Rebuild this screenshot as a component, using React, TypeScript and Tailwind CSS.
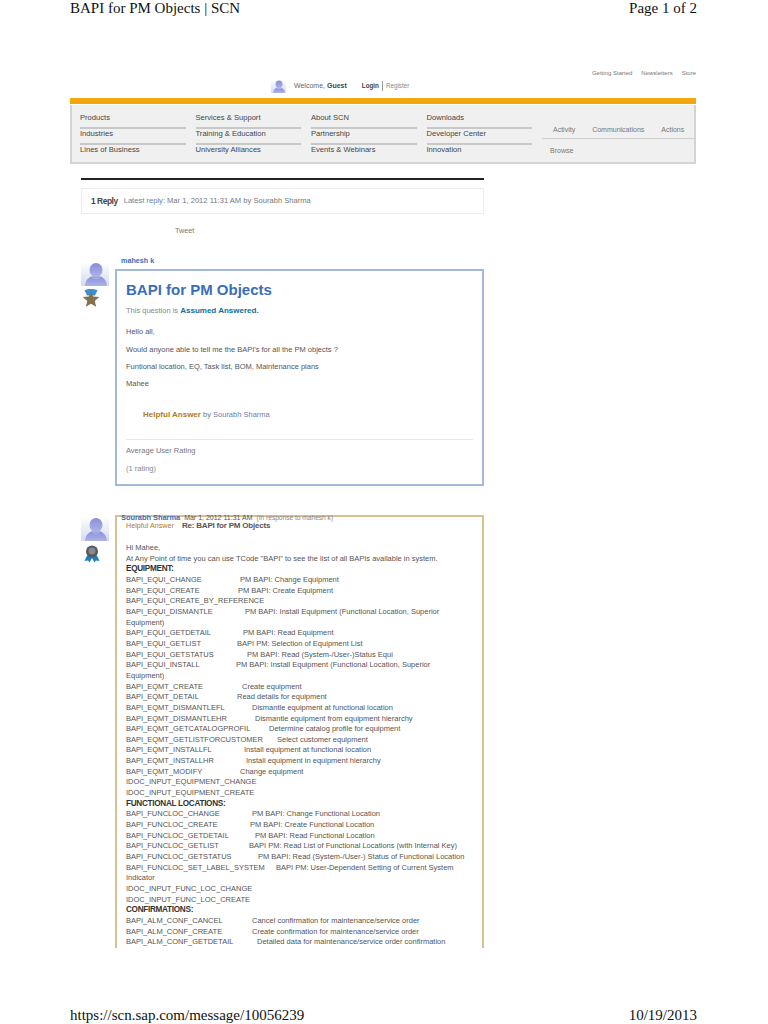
function Avatar({ id, className }: { id: string; className: string }) {
  return (
    <svg viewBox="0 0 28 24" className={className} aria-hidden="true">
      <defs>
        <linearGradient id={id} x1="0" y1="0" x2="0" y2="1">
          <stop offset="0" stopColor="#ffffff" />
          <stop offset="1" stopColor="#d3dbf3" />
        </linearGradient>
        <linearGradient id={`${id}-p`} x1="0" y1="0" x2="0" y2="1">
          <stop offset="0" stopColor="#8a8fd6" />
          <stop offset="1" stopColor="#aeb3e8" />
        </linearGradient>
      </defs>
      <rect width="28" height="24" fill={`url(#${id})`} />
      <ellipse cx="15" cy="8" rx="6.5" ry="7" fill={`url(#${id}-p)`} />
      <path d="M4 24c0-5.5 4-9 7.5-10 2 1.5 5 1.5 7 0 3.5 1 7.500 4.500 7.500 10z" fill={`url(#${id}-p)`} />
      <path d="M11 14.5c2 2 6 2 8 0l.6.3c-2 2.5-7 2.5-9.200 0z" fill="#c6c9f0" />
    </svg>
  )
}

function StarBadge() {
  return (
    <svg viewBox="0 0 18 18" className="mt-[3px] ml-[1px] h-[18px] w-[18px]" aria-hidden="true">
      <path d="M2.5 1.2C6 -.3 12 -.3 15.5 1.2L13 6.5H5z" fill="#3c8fd0" />
      <path
        d="M9 3l2.2 4.6 6.1.5-4.600 3.800 1.500 5.800L9 14.800l-5.200 2.900 1.500-5.800L.7 8.100l6.100-.5z"
        fill="#84704f"
      />
    </svg>
  )
}

function RibbonBadge() {
  return (
    <svg viewBox="0 0 16 18" className="mt-[4px] ml-[3px] h-[18px] w-[16px]" aria-hidden="true">
      <path d="M3 10.5L.5 16l3.5-.5L5.5 17.5 8 13l2.5 4.5 1.5-2 3.5.5-2.500-5.500z" fill="#1f7fc4" />
      <circle cx="8" cy="6.5" r="6" fill="#55595d" />
      <circle cx="8" cy="6" r="3.5" fill="#85898d" />
    </svg>
  )
}

const navColumns = [
  ['Products', 'Industries', 'Lines of Business'],
  ['Services & Support', 'Training & Education', 'University Alliances'],
  ['About SCN', 'Partnership', 'Events & Webinars'],
  ['Downloads', 'Developer Center', 'Innovation'],
]

type Line =
  | { kind: 'text'; text: string }
  | { kind: 'head'; text: string }
  | { kind: 'row'; name: string; x: number; desc: string }

const lines: Line[] = [
  { kind: 'text', text: 'Hi Mahee,' },
  { kind: 'text', text: 'At Any Point of time you can use TCode "BAPI" to see the list of all BAPIs available in system.' },
  { kind: 'head', text: 'EQUIPMENT:' },
  { kind: 'row', name: 'BAPI_EQUI_CHANGE', x: 240, desc: 'PM BAPI: Change Equipment' },
  { kind: 'row', name: 'BAPI_EQUI_CREATE', x: 238, desc: 'PM BAPI: Create Equipment' },
  { kind: 'text', text: 'BAPI_EQUI_CREATE_BY_REFERENCE' },
  { kind: 'row', name: 'BAPI_EQUI_DISMANTLE', x: 245, desc: 'PM BAPI: Install Equipment (Functional Location, Superior' },
  { kind: 'text', text: 'Equipment)' },
  { kind: 'row', name: 'BAPI_EQUI_GETDETAIL', x: 243, desc: 'PM BAPI: Read Equipment' },
  { kind: 'row', name: 'BAPI_EQUI_GETLIST', x: 237, desc: 'BAPI PM: Selection of Equipment List' },
  { kind: 'row', name: 'BAPI_EQUI_GETSTATUS', x: 247, desc: 'PM BAPI: Read (System-/User-)Status Equi' },
  { kind: 'row', name: 'BAPI_EQUI_INSTALL', x: 236, desc: 'PM BAPI: Install Equipment (Functional Location, Superior' },
  { kind: 'text', text: 'Equipment)' },
  { kind: 'row', name: 'BAPI_EQMT_CREATE', x: 242, desc: 'Create equipment' },
  { kind: 'row', name: 'BAPI_EQMT_DETAIL', x: 237, desc: 'Read details for equipment' },
  { kind: 'row', name: 'BAPI_EQMT_DISMANTLEFL', x: 252, desc: 'Dismantle equipment at functional location' },
  { kind: 'row', name: 'BAPI_EQMT_DISMANTLEHR', x: 255, desc: 'Dismantle equipment from equipment hierarchy' },
  { kind: 'row', name: 'BAPI_EQMT_GETCATALOGPROFIL', x: 269, desc: 'Determine catalog profile for equipment' },
  { kind: 'row', name: 'BAPI_EQMT_GETLISTFORCUSTOMER', x: 277, desc: 'Select customer equipment' },
  { kind: 'row', name: 'BAPI_EQMT_INSTALLFL', x: 244, desc: 'Install equipment at functional location' },
  { kind: 'row', name: 'BAPI_EQMT_INSTALLHR', x: 246, desc: 'Install equipment in equipment hierarchy' },
  { kind: 'row', name: 'BAPI_EQMT_MODIFY', x: 240, desc: 'Change equipment' },
  { kind: 'text', text: 'IDOC_INPUT_EQUIPMENT_CHANGE' },
  { kind: 'text', text: 'IDOC_INPUT_EQUIPMENT_CREATE' },
  { kind: 'head', text: 'FUNCTIONAL LOCATIONS:' },
  { kind: 'row', name: 'BAPI_FUNCLOC_CHANGE', x: 252, desc: 'PM BAPI: Change Functional Location' },
  { kind: 'row', name: 'BAPI_FUNCLOC_CREATE', x: 250, desc: 'PM BAPI: Create Functional Location' },
  { kind: 'row', name: 'BAPI_FUNCLOC_GETDETAIL', x: 255, desc: 'PM BAPI: Read Functional Location' },
  { kind: 'row', name: 'BAPI_FUNCLOC_GETLIST', x: 249, desc: 'BAPI PM: Read List of Functional Locations (with Internal Key)' },
  { kind: 'row', name: 'BAPI_FUNCLOC_GETSTATUS', x: 258, desc: 'PM BAPI: Read (System-/User-) Status of Functional Location' },
  { kind: 'row', name: 'BAPI_FUNCLOC_SET_LABEL_SYSTEM', x: 276, desc: 'BAPI PM: User-Dependent Setting of Current System' },
  { kind: 'text', text: 'Indicator' },
  { kind: 'text', text: 'IDOC_INPUT_FUNC_LOC_CHANGE' },
  { kind: 'text', text: 'IDOC_INPUT_FUNC_LOC_CREATE' },
  { kind: 'head', text: 'CONFIRMATIONS:' },
  { kind: 'row', name: 'BAPI_ALM_CONF_CANCEL', x: 252, desc: 'Cancel confirmation for maintenance/service order' },
  { kind: 'row', name: 'BAPI_ALM_CONF_CREATE', x: 252, desc: 'Create confirmation for maintenance/service order' },
  { kind: 'row', name: 'BAPI_ALM_CONF_GETDETAIL', x: 257, desc: 'Detailed data for maintenance/service order confirmation' },
]

function BodyLine({ line }: { line: Line }) {
  if (line.kind === 'head') {
    return <div className="text-[8.2px] font-bold tracking-[-0.3px] text-[#333]">{line.text}</div>
  }
  if (line.kind === 'text') {
    return <div className="whitespace-nowrap">{line.text}</div>
  }
  return (
    <div className="flex whitespace-nowrap">
      {/* desc starts at a page x, the original lines it up with runs of spaces */}
      <span className="shrink-0" style={{ width: line.x - 126 }}>
        {line.name}
      </span>
      <span>{line.desc}</span>
    </div>
  )
}

export default function App() {
  return (
    <div className="h-[1024px] w-[768px] overflow-hidden bg-white font-['Liberation_Sans',Arial,sans-serif] text-[#555]">
      <div className="flex h-[17px] items-center justify-between pr-[71px] pl-[70px] font-['Liberation_Serif','Times_New_Roman',serif] text-[15px] text-[#111]">
        <span>BAPI for PM Objects | SCN</span>
        <span>Page 1 of 2</span>
      </div>

      <div className="mt-[52px] mr-[72px] ml-[70px]">
        <div className="flex h-[8px] items-center justify-end gap-[9px] text-[6px] leading-[8px] text-[#777]">
          <span>Getting Started</span>
          <span>Newsletters</span>
          <span>Store</span>
        </div>
        <div className="mt-[-1px] flex h-[20px] items-center pl-[201px] text-[7px] text-[#666]">
          <Avatar id="av-top" className="h-[15px] w-[15px]" />
          <span className="ml-[8px]">
            Welcome, <b className="font-bold text-[#444]">Guest</b>
          </span>
          <b className="ml-[15px] text-[6.3px] font-bold text-[#444]">Login</b>
          <span className="ml-[3px] border-l border-[#999] pl-[3px] text-[6.3px] text-[#888]">Register</span>
        </div>
        <div className="mt-[2px] h-[6px] bg-[#f0a80c]" />
        <div className="mt-[1px] flex h-[59px] border-r-2 border-b-2 border-l-2 border-[#d4d4d4] bg-[#f0f0f0] pl-[8px] text-[7.6px] text-[#444]">
          {navColumns.map((col) => (
            <div key={col[0]} className="mr-[10px] w-[105.5px] pt-[8px]">
              {col.map((item, i) => (
                <div
                  key={item}
                  className={i < 2 ? 'h-[16px] border-b-2 border-[#c8c8c8] leading-[10px]' : 'mt-[-0.5px] leading-[10px]'}
                >
                  {item}
                </div>
              ))}
            </div>
          ))}
          <div className="flex-1 text-[#777]">
            <div className="flex h-[34px] items-end gap-[17px] border-b border-[#cfcfcf] pb-[3px] pl-[11px] text-[7px]">
              <span>Activity</span>
              <span>Communications</span>
              <span>Actions</span>
            </div>
            <div className="mt-[7px] pl-[8px] text-[7px] leading-[10px]">Browse</div>
          </div>
        </div>
      </div>

      <div className="mt-[14px] ml-[81px] w-[403px]">
        <div className="h-[2px] bg-[#222]" />
        <div className="mt-[8px] flex h-[26px] items-center border border-[#ececec] pl-[9px] text-[7.6px]">
          <span className="text-[8.4px] font-bold tracking-[-0.45px] text-[#444]">1 Reply</span>
          <span className="ml-[6px] text-[#6a80a8]">Latest reply:</span>
          <span className="ml-[2px] text-[#777]">Mar 1, 2012 11:31 AM by Sourabh Sharma</span>
        </div>
        <div className="mt-[12px] pl-[94px] text-[7.2px] leading-[10px] text-[#777]">Tweet</div>
      </div>

      <div className="mt-[21px] ml-[81px] flex w-[403px] items-start">
        <div className="mt-[5px] w-[34px] shrink-0">
          <Avatar id="av-q" className="h-[24px] w-[28px]" />
          <StarBadge />
        </div>
        <div className="flex-1">
          <div className="mb-[4px] pl-[6px] text-[7.2px] leading-[8px] font-bold text-[#3a6fb5]">mahesh k</div>
          <div className="h-[217px] border-2 border-[#a3b9d9] px-[9px] pt-[9px] text-[7.5px] text-[#555]">
            <h1 className="text-[15px] leading-[20px] font-bold text-[#3a6fb5]">BAPI for PM Objects</h1>
            <div className="mt-[6px] leading-[10px]">
              <span className="text-[#888]">This question is </span>
              <b className="text-[8px] font-bold text-[#0a6f9e]">Assumed Answered.</b>
            </div>
            <p className="mt-[11px] leading-[10px]">Hello all,</p>
            <p className="mt-[7.5px] leading-[10px]">Would anyone able to tell me the BAPI's for all the PM objects ?</p>
            <p className="mt-[7.5px] leading-[10px]">Funtional location, EQ, Task list, BOM, Maintenance plans</p>
            <p className="mt-[7px] leading-[10px]">Mahee</p>
            <div className="mt-[20.5px] pl-[17px] leading-[10px]">
              <b className="text-[8px] font-bold text-[#b27a22]">Helpful Answer</b>
              <span className="text-[#777]"> by </span>
              <span className="text-[#6a80a8]">Sourabh Sharma</span>
            </div>
            <div className="mt-[19px] border-t border-[#e8e8e8] pt-[6px] leading-[10px] text-[#777]">Average User Rating</div>
            <div className="mt-[8px] leading-[10px] text-[#888]">(1 rating)</div>
          </div>
        </div>
      </div>

      <div className="mt-[29px] ml-[81px] flex w-[403px] items-start">
        <div className="mt-[2px] w-[34px] shrink-0">
          <Avatar id="av-r" className="h-[24px] w-[28px]" />
          <RibbonBadge />
        </div>
        <div className="relative h-[433px] flex-1 border-t-2 border-r-2 border-l-2 border-[#d8c090] px-[9px] text-[7.5px]">
          <div className="absolute top-[-3px] left-[4px] flex items-baseline gap-[4px] whitespace-nowrap leading-[8px]">
            <b className="text-[7.4px] font-bold text-[#3a6fb5]">Sourabh Sharma</b>
            <span className="text-[7px] text-[#555]">Mar 1, 2012 11:31 AM</span>
            <span className="text-[6.6px] text-[#888]">(In response to mahesh k)</span>
          </div>
          <div className="mt-[5px] flex items-baseline gap-[8px] leading-[8px]">
            <span className="text-[7.2px] text-[#b27a22]">Helpful Answer</span>
            <b className="text-[8px] font-bold tracking-[-0.2px] text-[#555]">Re: BAPI for PM Objects</b>
          </div>
          <div className="mt-[13px] leading-[10.65px] text-[#555]">
            {lines.map((line, i) => (
              <BodyLine key={i} line={line} />
            ))}
          </div>
        </div>
      </div>

      <div className="mt-[59px] flex items-center justify-between pr-[71px] pl-[70px] font-['Liberation_Serif','Times_New_Roman',serif] text-[15px] leading-[17px] text-[#111]">
        <span>https://scn.sap.com/message/10056239</span>
        <span>10/19/2013</span>
      </div>
    </div>
  )
}
